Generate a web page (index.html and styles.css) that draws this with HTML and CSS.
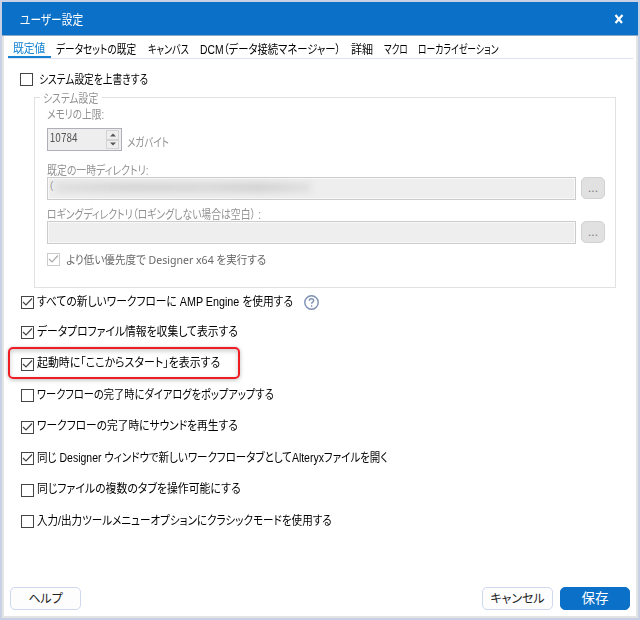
FILE: index.html
```html
<!DOCTYPE html>
<html lang="ja">
<head>
<meta charset="utf-8">
<title>ユーザー設定</title>
<link rel="stylesheet" href="styles.css">
</head>
<body>
<div class="window">
  <header class="titlebar"><h1><span class="t title-text">ユーザー設定</span></h1>
    <button class="close" aria-label="閉じる"><svg width="10" height="10" viewBox="0 0 10 10"><path d="M1.5 1 8 9M8.5 1 1.5 9" stroke="#fff" stroke-width="2.2"/></svg></button>
  </header>
  <main class="content">
    <nav class="tabs">
      <a class="tab active"><span class="t t1">既定値</span></a>
      <a class="tab"><span class="t t2">データセットの既定</span></a>
      <a class="tab"><span class="t t3">キャンバス</span></a>
      <a class="tab"><span class="t t4">DCM（データ接続マネージャー）</span></a>
      <a class="tab"><span class="t t5">詳細</span></a>
      <a class="tab"><span class="t t6">マクロ</span></a>
      <a class="tab"><span class="t t7">ローカライゼーション</span></a>
    </nav>
    <label class="check override"><i class="box"></i><span class="t c0">システム設定を上書きする</span></label>
    <fieldset class="group">
      <legend><span class="t g0">システム設定</span></legend>
      <div class="caption"><span class="t g1">メモリの上限:</span></div>
      <div class="memory">
        <div class="spinner"><span class="t value">10784</span>
          <div class="arrows"><i><svg width="6" height="4" viewBox="0 0 6 4"><path d="M0 3.5 3 .5 6 3.5z" fill="#555"/></svg></i><i><svg width="6" height="4" viewBox="0 0 6 4"><path d="M0 .5h6L3 3.5z" fill="#555"/></svg></i></div>
        </div>
        <span class="t g2">メガバイト</span>
      </div>
      <div class="caption dir"><span class="t g3">既定の一時ディレクトリ:</span></div>
      <div class="field-row"><div class="field"><span class="drive">(</span><span class="redacted"></span></div><button class="browse">...</button></div>
      <div class="caption log"><span class="t g4">ロギングディレクトリ（ロギングしない場合は空白） :</span></div>
      <div class="field-row"><div class="field"></div><button class="browse">...</button></div>
      <label class="check priority"><i class="box"><svg viewBox="0 0 13 13"><path d="m2 6 3 3 6-6.5"/></svg></i><span class="t g5">より低い優先度で Designer x64 を実行する</span></label>
    </fieldset>
    <div class="options">
      <label class="check"><i class="box"><svg viewBox="0 0 13 13"><path d="m2 6 3 3 6-6.5"/></svg></i><span class="t c1">すべての新しいワークフローに AMP Engine を使用する</span><svg class="help" viewBox="0 0 15 15"><circle cx="7.5" cy="7.5" r="6.7"/><path d="M5.3 5.7c0-1.2.9-2 2.2-2s2.2.8 2.2 1.9c0 1.5-2.1 1.5-2.1 3.2M7.6 10.2v1.5"/></svg></label>
      <label class="check"><i class="box"><svg viewBox="0 0 13 13"><path d="m2 6 3 3 6-6.5"/></svg></i><span class="t c2">データプロファイル情報を収集して表示する</span></label>
      <label class="check marked"><i class="box"><svg viewBox="0 0 13 13"><path d="m2 6 3 3 6-6.5"/></svg></i><span class="t c3">起動時に「ここからスタート」を表示する</span></label>
      <label class="check"><i class="box"></i><span class="t c4">ワークフローの完了時にダイアログをポップアップする</span></label>
      <label class="check"><i class="box"><svg viewBox="0 0 13 13"><path d="m2 6 3 3 6-6.5"/></svg></i><span class="t c5">ワークフローの完了時にサウンドを再生する</span></label>
      <label class="check"><i class="box"><svg viewBox="0 0 13 13"><path d="m2 6 3 3 6-6.5"/></svg></i><span class="t c6">同じ Designer ウィンドウで新しいワークフロータブとしてAlteryxファイルを開く</span></label>
      <label class="check"><i class="box"></i><span class="t c7">同じファイルの複数のタブを操作可能にする</span></label>
      <label class="check"><i class="box"></i><span class="t c8">入力/出力ツールメニューオプションにクラシックモードを使用する</span></label>
    </div>
    <footer class="actions">
      <button class="btn help-btn"><span class="t b1">ヘルプ</span></button>
      <button class="btn"><span class="t b2">キャンセル</span></button>
      <button class="btn primary"><span class="t b3">保存</span></button>
    </footer>
  </main>
</div>
</body>
</html>
```

FILE: styles.css
```css
*, *::before { box-sizing: border-box; }
body { margin: 0; font-family: "Liberation Sans", "Noto Sans CJK JP", sans-serif; font-size: 12px; color: #000; }
button { font: inherit; padding: 0; margin: 0; }
.t { white-space: nowrap; font-feature-settings: "palt"; flex: none; line-height: 16px; transform-origin: 0 50%; }
.window { width: 640px; height: 620px; border: 2px solid #c8d0e6; display: flex; flex-direction: column; background: #e4e4e4; }
.titlebar { height: 34px; flex: none; background: #0b70c7; border-bottom: 1px solid #8cabc8; display: flex; align-items: center; justify-content: space-between; padding: 0 14px 0 18px; color: #fff; }
.titlebar h1 { margin: 2px 0 0; font-size: 13px; font-weight: 400; display: flex; }
.title-text { transform: scaleX(.825); }
.close { border: 0; background: none; width: 10px; height: 10px; display: flex; }
.content { flex: 1; margin: 0 2px 2px; background: #fff; display: flex; flex-direction: column; }
.tabs { display: grid; grid-template-columns: 43px 92px 52px 151px 33px 34px 1fr; height: 23px; flex: none; margin: 0 3px 0 4px; border-bottom: 1px solid #dfe2f4; font-size: 12px; }
.tab { display: flex; align-items: center; padding: 5px 0 0 5px; min-width: 0; }
.tab.active { color: #1583d1; border-bottom: 2px solid #1583d1; height: 22px; }
.t1 { transform: scaleX(.9); }
.t2 { transform: scaleX(.807); }
.t3 { transform: scaleX(.76); }
.t4 { transform: scaleX(.86); }
.t5 { transform: scaleX(.92); }
.t6 { transform: scaleX(.71); }
.t7 { transform: scaleX(.735); }
.c0 { transform: scaleX(.81); }
.c1 { transform: scaleX(.895); }
.c2 { transform: scaleX(.9); }
.c3 { transform: scaleX(.91); }
.c4 { transform: scaleX(.853); }
.c5 { transform: scaleX(.893); }
.c6 { transform: scaleX(.873); }
.c7 { transform: scaleX(.907); }
.c8 { transform: scaleX(.88); }
.g0 { transform: scaleX(.815); }
.g1 { transform: scaleX(.81); }
.g2 { transform: scaleX(.79); }
.g3 { transform: scaleX(.825); }
.g4 { transform: scaleX(.82); }
.g5 { transform: scaleX(.96); }
.check { display: flex; align-items: center; height: 31.5px; position: relative; }
.check .t { margin-left: 3px; margin-top: -2px; }
.box { width: 13px; height: 13px; border: 1px solid #444; background: #fff; flex: none; display: block; }
.box svg { display: block; margin: -1px; width: 13px; height: 13px; }
.box path { fill: none; stroke: #444; stroke-width: 1.2; }
.override { height: 18px; margin: 11px 0 0 16px; }
.override .t { margin: 2px 0 0 6px; }
.group { margin: 9px 20px 0 30px; height: 191px; border: 1px solid #e2e2e2; padding: 0 10px 0 12px; min-width: 0; position: relative; color: #929292; font-size: 12px; display: block; flex: none; }
.group legend { position: absolute; left: 5px; top: -7px; padding: 0 3px; width: 62px; background: #fff; display: flex; }
.caption { height: 16px; display: flex; margin-top: 9px; }
.memory { display: flex; align-items: center; margin-top: 5px; height: 23px; }
.spinner { width: 75px; height: 23px; background: #eee; border: 1px solid #aeb0b8; display: flex; justify-content: space-between; padding: 1px; }
.value { font-family: "Noto Sans CJK JP", sans-serif; color: #555; padding-left: 1px; line-height: 14px; transform: scaleX(.83); }
.arrows { display: flex; flex-direction: column; margin-right: 1px; }
.arrows i { width: 13px; height: 9.5px; border: 1px solid #d3d3d3; display: flex; align-items: center; justify-content: center; }
.memory .g2 { margin: 6px 0 0 5px; }
.dir { margin-top: 12px; height: 14px; }
.field-row { display: flex; gap: 5px; align-items: flex-start; }
.field { width: 530px; height: 23px; border: 1px solid #ccc; background: #eee; box-shadow: inset 0 0 0 1px #f8f8f8; padding: 1px 2px; display: flex; }
.drive { font-size: 10px; line-height: 14px; }
.redacted { width: 256px; height: 11px; margin: 3px 0 0 2px; background: linear-gradient(90deg, #e0e0e0, #d7d7d7 30%, #dadada 60%, #d4d4d4 80%, #e2e2e2); filter: blur(3px); }
.browse { width: 24px; height: 22px; background: #e1e1e1; border: 1px solid #d2d2d2; border-radius: 5px; color: #777; line-height: 20px; }
.log { margin-top: 7px; height: 14px; }
.group .priority { height: 15px; margin-top: 8px; color: #666; font-size: 11px; }
.priority .box { border-color: #ccc; }
.priority path { stroke: #aaa; }
.priority .t { margin: 1px 0 0 6px; font-family: "Noto Sans", "Noto Sans CJK JP", sans-serif; }
.options { padding: 0 0 0 17px; display: flex; flex-direction: column; flex: none; }
.options .check:first-child { height: 29px; }
.options .check:nth-child(2) { height: 31px; }
.options .check:nth-child(3) { height: 32px; }
.help { width: 15px; height: 15px; margin-left: -19px; fill: none; stroke: #7d8fb3; stroke-width: 1.4; }
.marked::before { content: ""; position: absolute; left: -13px; top: -1px; width: 232px; height: 32px; border: 2px solid #ef1c24; border-radius: 5px; box-shadow: 0 1px 4px #bbb, inset 0 2px 5px #ccc; }
.marked .t, .marked .box { position: relative; }
.actions { margin-top: auto; padding: 0 6px 6px 6px; display: flex; gap: 7px; }
.btn { width: 71px; height: 23px; border: 1px solid #ced9ef; border-radius: 5px; background: #fdfdfd; color: #222; display: flex; align-items: center; justify-content: center; font-size: 12px; }
.help-btn { margin-right: auto; }
.primary { width: 70px; background: #0b70c7; border-color: #0b70c7; color: #fff; font-size: 13.5px; }
```
